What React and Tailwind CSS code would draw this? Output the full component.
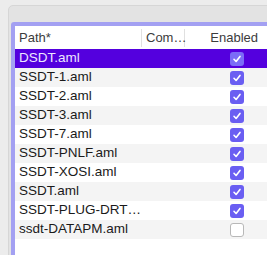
import React from 'react';

const rows = [
  { name: 'DSDT.aml', on: true },
  { name: 'SSDT-1.aml', on: true },
  { name: 'SSDT-2.aml', on: true },
  { name: 'SSDT-3.aml', on: true },
  { name: 'SSDT-7.aml', on: true },
  { name: 'SSDT-PNLF.aml', on: true },
  { name: 'SSDT-XOSI.aml', on: true },
  { name: 'SSDT.aml', on: true },
  { name: 'SSDT-PLUG-DRT…', on: true },
  { name: 'ssdt-DATAPM.aml', on: false },
];

const Check = ({ on, selected }) =>
  on ? (
    <div className={`w-[14px] h-[14px] rounded-[3px] flex items-center justify-center ${selected ? 'bg-[#7b6cf7]' : 'bg-[#6a5ef2]'}`}>
      <svg width="10" height="10" viewBox="0 0 10 10" fill="none">
        <path d="M2 5.3 L4.1 7.5 L8 2.4" stroke="white" strokeWidth="1.6" strokeLinecap="round" strokeLinejoin="round" />
      </svg>
    </div>
  ) : (
    <div className="w-[14px] h-[14px] rounded-[3px] bg-white border border-[#b8b8b8]" />
  );

export default function App() {
  return (
    <div className="w-[267px] h-[255px] bg-[#ececec] overflow-hidden pl-2 pt-[5px] font-['Liberation_Sans',Helvetica,sans-serif]">
      <div className="w-[300px] h-[300px] bg-[#e3e3e3] border border-[#d6d6d6] rounded-[5px] pl-[2px] pt-4">
        <div className="w-[290px] h-[280px] border-4 border-[#a3a0f2] rounded-[3px] bg-white">
          <div className="flex h-[23px] items-center text-[13px] text-[#3c3c3c] bg-white">
            <div className="w-[127px] pl-[4px] h-[18px] flex items-center border-r border-[#e0e0e0]">Path*</div>
            <div className="w-[43px] pl-[4px] h-[18px] flex items-center border-r border-[#e0e0e0]">Com…</div>
            <div className="w-[73px] text-right">Enabled</div>
          </div>
          {rows.map((r, i) => {
            const selected = i === 0;
            const bg = selected ? 'bg-[#5400de]' : i % 2 === 1 ? 'bg-[#f4f4f4]' : 'bg-white';
            return (
              <div key={r.name} className={`flex items-center h-[19px] ${bg}`}>
                <div className={`w-[215px] pl-[4px] text-[13.5px] ${selected ? 'text-[#ece6ff]' : 'text-[#1a1a1a]'}`}>{r.name}</div>
                <Check on={r.on} selected={selected} />
              </div>
            );
          })}
        </div>
      </div>
    </div>
  );
}
